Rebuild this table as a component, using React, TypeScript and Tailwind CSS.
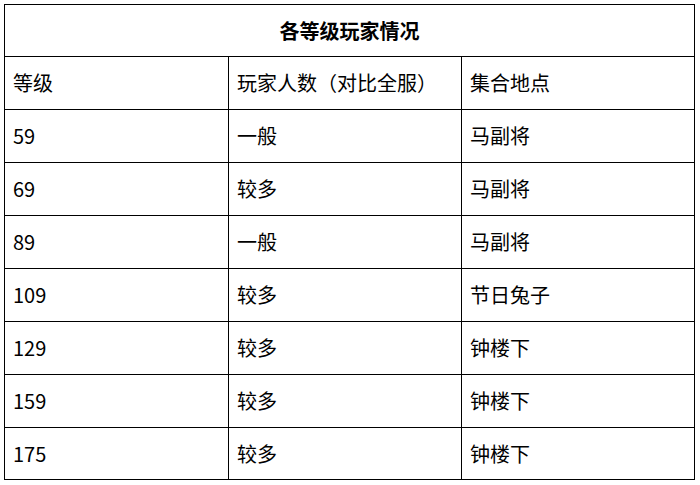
const rows: [string, string, string][] = [
  ['等级', '玩家人数（对比全服）', '集合地点'],
  ['59', '一般', '马副将'],
  ['69', '较多', '马副将'],
  ['89', '一般', '马副将'],
  ['109', '较多', '节日兔子'],
  ['129', '较多', '钟楼下'],
  ['159', '较多', '钟楼下'],
  ['175', '较多', '钟楼下'],
];

export default function App() {
  return (
    <div
      className="h-[485px] w-[700px] bg-white pl-[4px] pt-[4px] text-[20px] text-black"
      style={{ fontFamily: '"Noto Sans CJK SC", "Noto Sans", sans-serif' }}
    >
      <div className="w-[691px] border-l border-t border-black">
        <div className="flex h-[52px] items-center justify-center border-b border-r border-black font-bold">
          各等级玩家情况
        </div>
        {rows.map((r, i) => (
          <div
            key={i}
            className={`grid grid-cols-[224px_233px_233px] ${i === rows.length - 1 ? 'h-[52px]' : 'h-[53px]'}`}
          >
            {r.map((c, j) => (
              <div key={j} className="flex items-center border-b border-r border-black pl-[8px] leading-none">
                {c}
              </div>
            ))}
          </div>
        ))}
      </div>
    </div>
  );
}
